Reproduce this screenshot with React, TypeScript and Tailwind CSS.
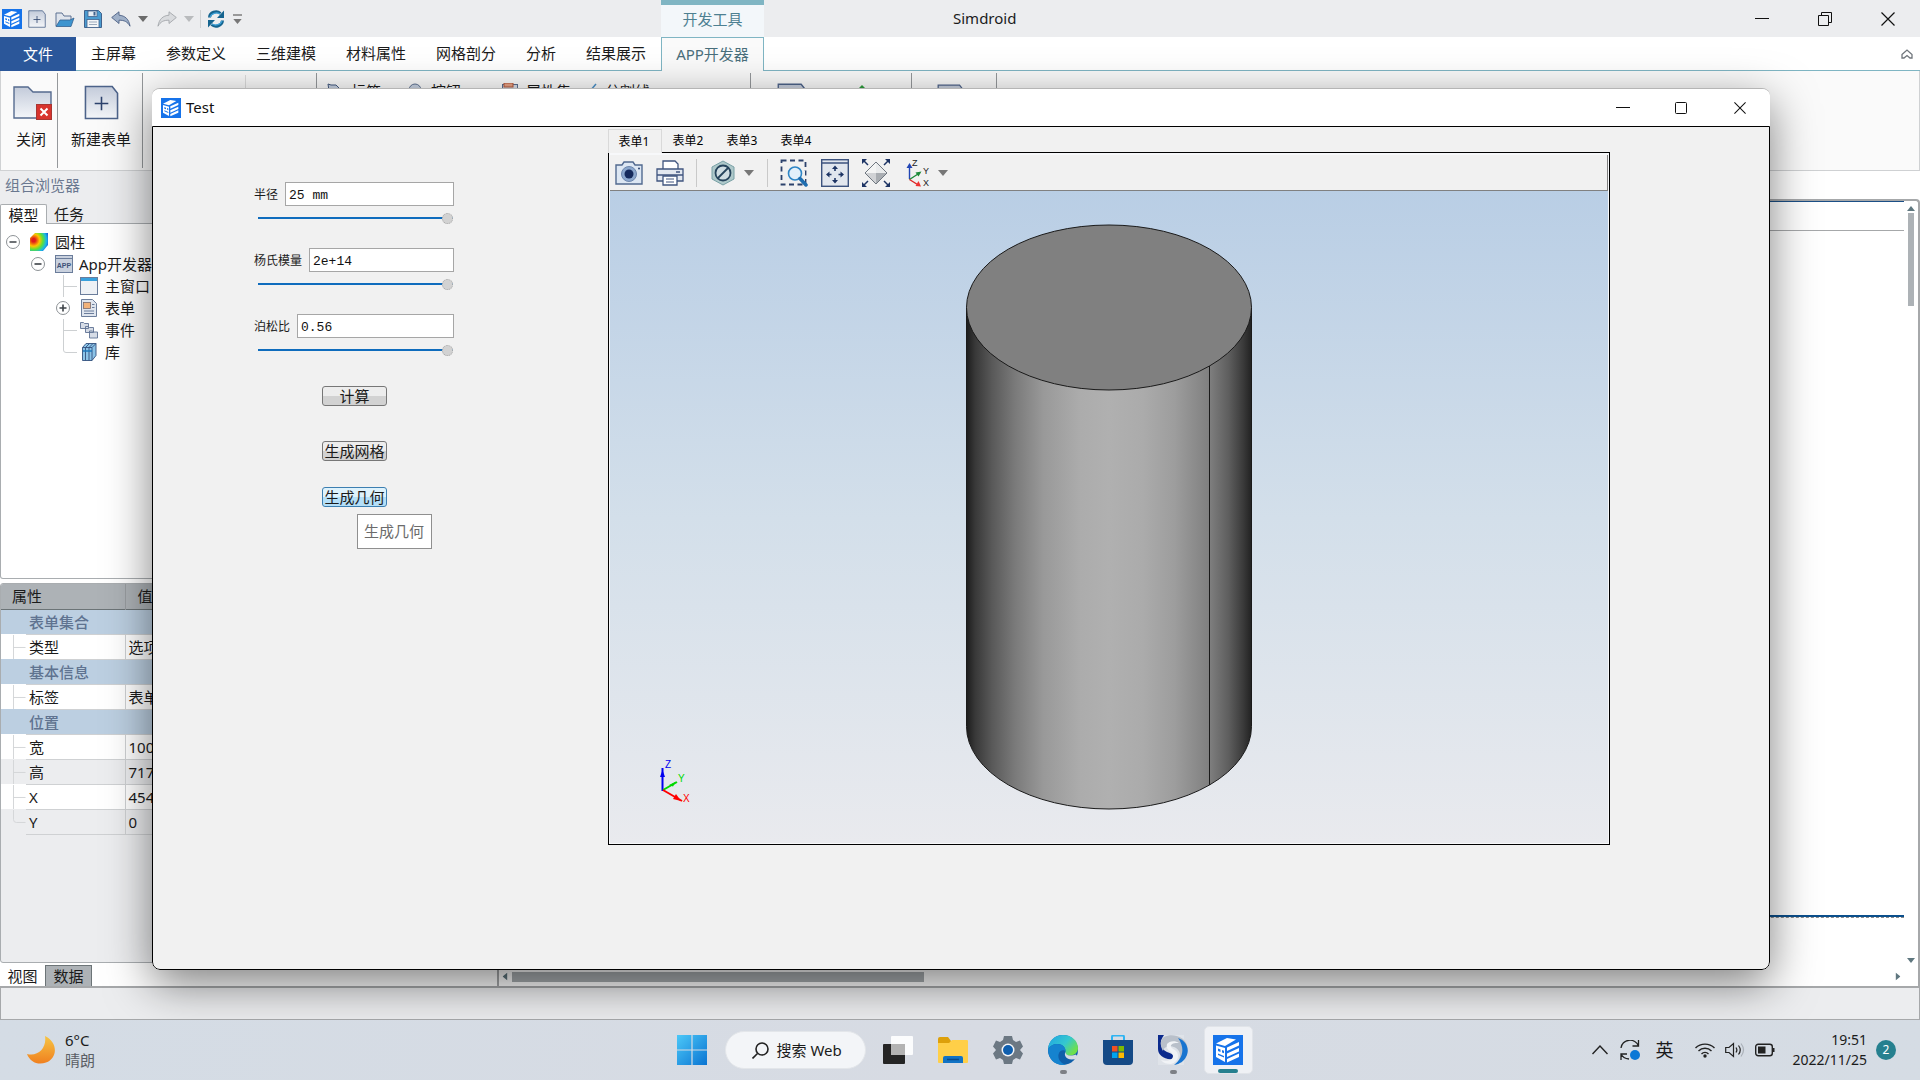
import { useState, type ReactNode } from 'react';

const menuTabs = ['主屏幕', '参数定义', '三维建模', '材料属性', '网格剖分', '分析', '结果展示'];
const formTabs = ['表单1', '表单2', '表单3', '表单4'];

const formFields = [
  { id: 'radius', label: '半径', value: '25 mm' },
  { id: 'young', label: '杨氏模量', value: '2e+14' },
  { id: 'poisson', label: '泊松比', value: '0.56' },
];

type PropRow = { section?: string; name?: string; value?: string; shaded?: boolean; last?: boolean };

const propRows: PropRow[] = [
  { section: '表单集合' },
  { name: '类型', value: '选项卡' },
  { section: '基本信息' },
  { name: '标签', value: '表单集合' },
  { section: '位置' },
  { name: '宽', value: '1002' },
  { name: '高', value: '717', shaded: true },
  { name: 'X', value: '454' },
  { name: 'Y', value: '0', shaded: true, last: true },
];

/* ---------- icons ---------- */

function Logo({ className }: { className: string }) {
  return (
    <svg viewBox="0 0 30 30" className={className}>
      <rect width="30" height="30" fill="#1673ea" />
      <path d="M3 8.500 14 3l9 1.500L12 11z" fill="#fff" />
      <path d="M3 10.500 12 13v14l-9-5z" fill="#fff" />
      <path d="M5 13.500l2.500 1v2.500L5 16zM9 15l2 .7v2.500l-2-.8zM5 18.500l6 2.500v1.500L5 20z" fill="#1673ea" />
      <path d="M14 12.500 26 7v3.500L14 16zM14 18.500 26 13v3.500L14 22zM14 24l12-5.500V22l-12 5.500z" fill="#fff" />
    </svg>
  );
}

function NewDocIcon({ className }: { className: string }) {
  return (
    <svg viewBox="0 0 36 36" className={className}>
      <defs>
        <linearGradient id="docFill" x1="0" y1="0" x2="0" y2="1">
          <stop offset="0" stopColor="#c3cbda" />
          <stop offset="1" stopColor="#f4f6f9" />
        </linearGradient>
      </defs>
      <path d="M1.500 1.500H29l5.500 7V34.500H1.500z" fill="url(#docFill)" stroke="#4d638a" strokeWidth="1.600" />
      <path d="M18 12v14M11 19h14" stroke="#2c426c" strokeWidth="1.600" />
    </svg>
  );
}

function Caret({ className }: { className: string }) {
  return (
    <svg viewBox="0 0 10 6" className={className}>
      <path d="M0 0h10L5 6z" fill="currentColor" />
    </svg>
  );
}

function OpenIcon() {
  return (
    <svg viewBox="0 0 20 18" className="h-[18px] w-5">
      <path d="M1 16V3h6l2 3h7v4" fill="#dfe4ec" stroke="#5c7091" />
      <path d="M1 16.500 5 10h10l4-2-3 8.500z" fill="#3d94cf" stroke="#35618f" strokeWidth=".8" />
    </svg>
  );
}

function SaveIcon() {
  return (
    <svg viewBox="0 0 18 18" className="size-[18px]">
      <path d="M.5.5h14l3 3v14H.5z" fill="#4a9bd0" stroke="#41628c" />
      <rect x="4" y="1" width="9" height="5.500" fill="#e6edf4" stroke="#41628c" strokeWidth=".8" />
      <rect x="9.500" y="2" width="2" height="3.500" fill="#41628c" />
      <rect x="3" y="9.500" width="12" height="8" fill="#f4f6f8" stroke="#41628c" strokeWidth=".8" />
      <path d="M5 12h8M5 14.500h8" stroke="#9aa9bc" />
    </svg>
  );
}

function UndoIcon({ flip }: { flip?: boolean }) {
  return (
    <svg viewBox="0 0 20 16" className={flip ? 'h-4 w-5 -scale-x-100' : 'h-4 w-5'}>
      <path
        d="M.7 6.500 8 .8v3.400c6 .4 10 4 11 11-2.500-4.500-5.500-6-11-6v3.300z"
        fill={flip ? '#d9dbde' : '#9fb0c8'}
        stroke={flip ? '#a3a6aa' : '#4c6084'}
        strokeWidth=".9"
      />
    </svg>
  );
}

function RefreshIcon() {
  return (
    <svg viewBox="0 0 18 18" className="size-[18px]">
      <path d="M2.500 7.500a6.500 6 0 0 1 11-4M15.500 10.500a6.500 6 0 0 1-11 4" fill="none" stroke="#15648f" strokeWidth="3" />
      <path d="M17 .5V8h-7zM1 17.500V10h7z" fill="#15648f" />
      <path d="M3 7a6.500 5.500 0 0 1 10-3M15 11a6.500 5.500 0 0 1-10 3" fill="none" stroke="#3fa3da" strokeWidth="1.200" />
    </svg>
  );
}

function CloseFolderIcon() {
  return (
    <svg viewBox="0 0 39 34" className="h-[34px] w-[39px]">
      <path d="M1 32V1h14l5 5h18v26z" fill="url(#docFill)" stroke="#566b8f" strokeWidth="1.400" />
      <rect x="23.500" y="18.500" width="15" height="15" fill="#d8342e" stroke="#a83632" />
      <path d="m27.500 22.500 7 7m0-7-7 7" stroke="#fff" strokeWidth="2" />
    </svg>
  );
}

function MinimizeIcon() {
  return (
    <svg viewBox="0 0 14 14" className="size-[14px]">
      <path d="M0 6.500h14" stroke="#111" />
    </svg>
  );
}

function RestoreIcon() {
  return (
    <svg viewBox="0 0 14 14" className="size-[14px]" fill="none" stroke="#111">
      <path d="M.5 3.500h10v10H.5zM3.500 3.500v-3h10v10h-3" />
    </svg>
  );
}

function MaximizeIcon() {
  return (
    <svg viewBox="0 0 12 12" className="size-3" fill="none" stroke="#111">
      <rect x=".5" y=".5" width="11" height="11" rx="1" />
    </svg>
  );
}

function CrossIcon({ className }: { className: string }) {
  return (
    <svg viewBox="0 0 14 14" className={className}>
      <path d="m.5.5 13 13m0-13-13 13" stroke="#111" strokeWidth="1.200" />
    </svg>
  );
}

/* ---------- main window chrome ---------- */

function TitleBar() {
  return (
    <header className="flex h-[37px] shrink-0 bg-[#ecedef] text-[#1b1b1b]">
      <div className="flex w-[661px] items-center pl-[2px]">
        <Logo className="size-5" />
        <button aria-label="新建" className="ml-[6px]"><NewDocIcon className="size-[18px]" /></button>
        <button aria-label="打开" className="ml-[9px]"><OpenIcon /></button>
        <button aria-label="保存" className="ml-[9px]"><SaveIcon /></button>
        <button aria-label="撤销" className="ml-[9px]"><UndoIcon /></button>
        <button aria-label="撤销列表" className="ml-[7px] text-[#6b6b6b]"><Caret className="h-[6px] w-[10px]" /></button>
        <button aria-label="重做" className="ml-[9px]"><UndoIcon flip /></button>
        <button aria-label="重做列表" className="ml-[7px] text-[#b9bbbd]"><Caret className="h-[6px] w-[10px]" /></button>
        <span className="ml-[6px] h-[18px] w-px bg-[#cfd1d3]" />
        <button aria-label="刷新" className="ml-[6px]"><RefreshIcon /></button>
        <button aria-label="自定义" className="ml-[8px] flex flex-col gap-[3px] text-[#777]">
          <span className="h-[2px] w-[9px] bg-[#999]" />
          <Caret className="h-[5px] w-[9px]" />
        </button>
      </div>
      <div className="w-[103px] border-t-[5px] border-[#7fb5c3] bg-[#f3f7fa] pt-[3px] text-center text-[15px] leading-[22px] text-[#4d8091]">
        开发工具
      </div>
      <div className="flex flex-1 items-center pl-[189px] text-[15px]">Simdroid</div>
      <button aria-label="最小化" className="flex w-[63px] items-center justify-center"><MinimizeIcon /></button>
      <button aria-label="还原" className="flex w-[63px] items-center justify-center"><RestoreIcon /></button>
      <button aria-label="关闭" className="flex w-16 items-center justify-center"><CrossIcon className="size-[14px]" /></button>
    </header>
  );
}

function MenuBar() {
  return (
    <nav className="flex h-[34px] shrink-0 bg-white text-[15px] text-[#1b1b1b]">
      <button className="w-[76px] bg-[#2b579a] text-white">文件</button>
      <div className="flex w-[585px] border-b border-[#7fb5c3]">
        {menuTabs.map((tab) => (
          <button key={tab} className="px-[15px]">{tab}</button>
        ))}
      </div>
      <button className="w-[103px] border border-b-0 border-[#7fb5c3] bg-[#fafafa] text-[#4a6f7c]">APP开发器</button>
      <div className="flex flex-1 items-center justify-end border-b border-[#7fb5c3] pr-[7px]">
        <button aria-label="折叠功能区">
          <svg viewBox="0 0 12 10" className="h-[10px] w-3">
            <path d="M1 5.500 6 1l5 4.500V9H9L6 6.500 3 9H1z" fill="none" stroke="#70767c" strokeWidth="1.300" />
          </svg>
        </button>
      </div>
    </nav>
  );
}

function RibbonItem({ label, icon, className }: { label: string; icon: ReactNode; className: string }) {
  return (
    <button className={`flex h-5 items-center gap-2 ${className}`}>
      <svg viewBox="0 0 16 16" className="size-4 shrink-0">{icon}</svg>
      {label}
    </button>
  );
}

function Ribbon() {
  return (
    <section className="flex h-[100px] shrink-0 border-x border-b border-[#cfd1d3] bg-[#fafafa] text-[15px] text-[#1b1b1b]">
      <button className="flex w-[56px] flex-col items-center gap-2 pt-[15px] pl-[6px]">
        <CloseFolderIcon />
        <span className="pr-[2px]">关闭</span>
      </button>
      <span className="my-[2px] w-px bg-[#95989b]" />
      <button className="flex w-[84px] flex-col items-center gap-2 pt-[14px] pl-[2px]">
        <NewDocIcon className="size-[35px]" />
        新建表单
      </button>
      <span className="my-[2px] w-px bg-[#95989b]" />
      <div className="w-[102px]" />
      <span className="my-1 w-px bg-[#dcdcdc]" />
      <div className="w-[70px]" />
      <span className="my-[2px] w-px bg-[#95989b]" />
      <div className="flex w-[433px] pt-[10px] pl-[10px]">
        <RibbonItem className="w-20" label="标签" icon={<path d="M1 1l3 1h5l6 6-6 7-7-7z" fill="#c7d2e2" stroke="#43597f" />} />
        <RibbonItem className="w-[95px]" label="按钮" icon={<circle cx="8" cy="7" r="6" fill="#c7d2e2" stroke="#5c7091" />} />
        <RibbonItem
          className="w-[79px]"
          label="属性集"
          icon={<><rect x=".5" y="1.500" width="15" height="14" fill="#d8dee8" stroke="#5c7091" /><rect x="2" y="0" width="9" height="4" fill="#e8a184" stroke="#b0573a" /></>}
        />
        <RibbonItem className="w-[90px]" label="分割线" icon={<path d="M3 15 15 1" stroke="#4a90c8" strokeWidth="1.500" />} />
      </div>
      <span className="my-[2px] w-px bg-[#95989b]" />
      <div className="flex w-[160px] gap-[40px] pt-[12px] pl-[26px]">
        <NewDocIcon className="size-[30px]" />
        <svg viewBox="0 0 30 30" className="size-[30px]"><path d="m15 2 10 10H5z" fill="#2f9e3d" /></svg>
      </div>
      <span className="my-[2px] w-px bg-[#95989b]" />
      <div className="w-[84px] pt-[13px] pl-[25px]">
        <NewDocIcon className="size-7" />
      </div>
      <span className="my-[2px] w-px bg-[#95989b]" />
    </section>
  );
}

/* ---------- left dock ---------- */

function Expander({ open }: { open: boolean }) {
  return (
    <svg viewBox="0 0 14 14" className="size-[14px] shrink-0">
      <circle cx="7" cy="7" r="6.500" fill="#fff" stroke="#8d9296" />
      <path d={open ? 'M3.500 7h7' : 'M3.500 7h7M7 3.500v7'} stroke="#3c4247" strokeWidth="1.600" />
    </svg>
  );
}

function Branch({ last }: { last?: boolean }) {
  return (
    <svg viewBox="0 0 14 22" className="h-[22px] w-[14px] shrink-0" fill="none" stroke="#cdd0d2">
      <path d={last ? 'M.5 0v9q0 2.500 2.500 2.500h11' : 'M.5 0v22M.5 11.500h13.500'} />
    </svg>
  );
}

const treeIcon = 'size-[18px] shrink-0';

function ModelTree() {
  return (
    <ul className="h-[355px] shrink-0 overflow-hidden rounded-b-[3px] border border-t-0 border-[#a9adb0] bg-white pt-[7px] text-[15px] leading-[22px] text-[#1b1b1b]">
      <li className="flex h-[22px] items-center pl-[5px]">
        <Expander open />
        <svg viewBox="0 0 18 18" className={`ml-[10px] mr-[7px] ${treeIcon}`}>
          <defs>
            <radialGradient id="contour" cx=".2" cy=".4" r=".95">
              <stop offset=".1" stopColor="#e01b1b" />
              <stop offset=".35" stopColor="#ffc400" />
              <stop offset=".55" stopColor="#5be03a" />
              <stop offset=".75" stopColor="#19b7e8" />
              <stop offset="1" stopColor="#1b2fd0" />
            </radialGradient>
          </defs>
          <path d="M0 5 5 0h13v12l-5 6H0z" fill="url(#contour)" />
        </svg>
        圆柱
      </li>
      <li className="flex h-[22px] items-center pl-[30px] whitespace-nowrap">
        <Expander open />
        <svg viewBox="0 0 18 18" className={`ml-[10px] mr-[6px] ${treeIcon}`}>
          <rect x=".5" y=".5" width="17" height="17" fill="#c9d1de" stroke="#6b7d9b" />
          <path d="M1 3.500h16" stroke="#6b7d9b" />
          <text x="9" y="13" textAnchor="middle" fontSize="7" fontWeight="700" fill="#3d5279" fontFamily="Liberation Sans, sans-serif">APP</text>
        </svg>
        App开发器
      </li>
      <li className="flex h-[22px] items-center pl-[62px] whitespace-nowrap">
        <Branch />
        <svg viewBox="0 0 18 18" className={`ml-[3px] mr-[7px] ${treeIcon}`}>
          <rect x=".5" y=".5" width="17" height="17" fill="#eef1f5" stroke="#6b7d9b" />
          <rect x="1" y="1" width="16" height="3" fill="#39a0dc" />
        </svg>
        主窗口
      </li>
      <li className="flex h-[22px] items-center pl-[55px]">
        <Expander open={false} />
        <svg viewBox="0 0 18 18" className={`ml-[10px] mr-[7px] ${treeIcon}`}>
          <path d="M1.500.5h11l4 4v13h-15z" fill="#dfe5ee" stroke="#6b7d9b" />
          <rect x="3.500" y="3.500" width="7" height="6" fill="#f2b27a" stroke="#7a6a6a" strokeWidth=".8" />
          <path d="M12 5.500h2.500M12 8.500h2.500M4 12h10M4 14.500h10" stroke="#6b7d9b" />
        </svg>
        表单
      </li>
      <li className="flex h-[22px] items-center pl-[62px]">
        <Branch />
        <svg viewBox="0 0 18 18" className={`ml-[3px] mr-[7px] ${treeIcon}`} fill="#d6dce6" stroke="#5f7293" strokeWidth=".9">
          <path d="M.5 1.500h3l1 1h4v5h-8zM5.500 5.500h3l1 1h4v5h-8zM9.500 10h3l1 1h4v6h-8z" />
        </svg>
        事件
      </li>
      <li className="flex h-[22px] items-center pl-[62px]">
        <Branch last />
        <svg viewBox="0 0 18 18" className={`ml-[3px] mr-[7px] ${treeIcon}`}>
          <path d="M2.500 4.500 6 .5h10v12l-4 5H2.500z" fill="#8cc4e8" stroke="#33517e" strokeWidth=".9" />
          <path d="M2.500 4.500h9.500v13M5.500 4.500v13M9 4.500v13M12 4.500 16 .5M5.500 4.500l4-4M9 4.500l4-4" fill="none" stroke="#33517e" strokeWidth=".9" />
          <path d="M3 8h9" stroke="#1c78bd" strokeWidth="1.500" />
        </svg>
        库
      </li>
    </ul>
  );
}

function PropertyGrid() {
  return (
    <div className="mt-1 flex-1 overflow-hidden rounded-[3px] border border-[#a9adb0] bg-[#ecedef]">
      <table className="w-full table-fixed border-collapse text-left text-[15px] leading-[22px] text-[#1b1b1b]">
        <colgroup>
          <col className="w-[25px]" />
          <col className="w-[99px]" />
          <col />
        </colgroup>
        <thead>
          <tr className="h-[25px] border-b border-[#6c7477] bg-[#adb2b6]">
            <th colSpan={2} className="p-0 pl-[11px] font-normal">属性</th>
            <th className="border-l border-[#989da0] p-0 pl-[12px] font-normal">值</th>
          </tr>
        </thead>
        <tbody>
          {propRows.map((row) =>
            row.section ? (
              <tr key={row.section} className="h-[25px] bg-[#bccfe1]">
                <td className="p-0" />
                <th colSpan={2} className="border-b border-[#cfd1d3] p-0 pl-[3px] font-medium text-[#5f7390]">{row.section}</th>
              </tr>
            ) : (
              <tr key={row.name} className={row.shaded ? 'h-[25px] bg-[#ecedef]' : 'h-[25px] bg-white'}>
                <td className="p-0">
                  <svg viewBox="0 0 25 25" className="block h-6 w-[25px]" fill="none" stroke="#d3d5d7">
                    <path d={row.last ? 'M12.500 0v10q0 3 3 3H25' : 'M12.500-1v27M12.500 13H25'} />
                  </svg>
                </td>
                <td className="border-b border-[#cfd1d3] p-0 pl-[3px]">{row.name}</td>
                <td className="border-b border-l border-[#cfd1d3] p-0 pl-[3px] whitespace-nowrap">{row.value}</td>
              </tr>
            ),
          )}
        </tbody>
      </table>
    </div>
  );
}

function LeftDock() {
  return (
    <aside className="flex w-[495px] shrink-0 flex-col">
      <div className="h-[33px] shrink-0 bg-[#ecedef] pt-[3px] pl-[5px] text-[15px] leading-[22px] text-[#6a7890]">组合浏览器</div>
      <div className="flex h-5 shrink-0 bg-[#ecedef] text-[15px] leading-5 text-[#1b1b1b]">
        <button className="w-[47px] rounded-t-[2px] border border-b-0 border-[#a9adb0] bg-white">模型</button>
        <div className="flex-1 border-b border-[#a9adb0] pl-[7px]"><button>任务</button></div>
      </div>
      <ModelTree />
      <PropertyGrid />
      <div className="mt-[2px] flex h-[21px] shrink-0 text-[15px] leading-5 text-[#1b1b1b]">
        <button className="w-[45px]">视图</button>
        <button className="w-[47px] border border-b-0 border-[#6c7477] bg-[#adb2b6]">数据</button>
      </div>
    </aside>
  );
}

/* Document canvas behind the dialog */
function DocumentArea() {
  return (
    <main className="mt-7 ml-[2px] flex flex-1 flex-col rounded-tr-[4px] border-2 border-b-0 border-[#a6a8aa] bg-white">
      <div className="flex flex-1">
        <div className="flex flex-1 flex-col">
          <div className="h-[30px] border-t border-b border-t-[#1b4f86] border-b-[#a6a8aa]" />
          <div className="flex-1" />
          <div className="h-[2px] bg-[#0b4f8c]" />
          <div className="h-px border-t border-dashed border-[#8a8a8a]" />
          <div className="h-[50px]" />
        </div>
        <div className="flex w-[14px] flex-col items-center pt-[5px] text-[#5f777f]">
          <Caret className="h-[5px] w-2 rotate-180" />
          <span className="mt-[2px] h-[93px] w-[6px] bg-[#adb2b6]" />
          <span className="flex-1" />
          <Caret className="mb-[5px] h-[5px] w-2" />
        </div>
      </div>
      <div className="flex h-[18px] items-start pt-1 pr-4 pl-[2px] text-[#5f777f]">
        <Caret className="mt-[2px] h-[5px] w-2 rotate-90" />
        <span className="ml-[3px] h-[10px] w-[412px] bg-[#a9aeb1]" />
        <span className="flex-1" />
        <Caret className="mt-[2px] h-[5px] w-2 -rotate-90" />
      </div>
    </main>
  );
}

/* ---------- 3D viewer ---------- */

function ViewerToolbar() {
  return (
    <div className="flex h-9 shrink-0 items-center border-r border-b border-[#808080] bg-[#f1f1f1] pl-[5px]">
      <button aria-label="截图">
        <svg viewBox="0 0 28 24" className="h-6 w-7">
          <path d="M1 4h6l2-3h9l2 3h7v19H1z" fill="#dde7f3" stroke="#51698f" strokeWidth="1.400" />
          <circle cx="14" cy="13" r="7.500" fill="#8ba7cd" stroke="#6d86ac" />
          <circle cx="14" cy="13" r="4.500" fill="#152a5c" />
          <circle cx="24" cy="7.500" r="1" fill="#2b4270" />
        </svg>
      </button>
      <button aria-label="打印" className="ml-[13px]">
        <svg viewBox="0 0 28 26" className="h-[26px] w-7" stroke="#40557f" strokeWidth="1.300">
          <path d="M7 9V1h12l3 3v5" fill="#fff" />
          <path d="M1 9h26v12H1z" fill="#e3e8f0" />
          <path d="M1 15h26" />
          <path d="M7 16h14v9H7z" fill="#fff" />
          <path d="M10 19h8M10 22h8" strokeWidth="1" />
          <path d="M20 12h4" />
        </svg>
      </button>
      <span className="ml-3 h-7 w-px bg-[#c9c9c9]" />
      <button aria-label="显示样式" className="ml-[14px]">
        <svg viewBox="0 0 24 26" className="h-[26px] w-6">
          <path d="M12 1l11 6v12l-11 6L1 19V7z" fill="#aec8ca" stroke="#78a0a5" />
          <circle cx="12" cy="13" r="7.500" fill="#cfdde2" stroke="#26445c" strokeWidth="1.800" />
          <path d="m6.500 18.500 11-11" stroke="#26445c" strokeWidth="1.800" />
        </svg>
      </button>
      <button aria-label="显示样式列表" className="ml-[9px] text-[#777]"><Caret className="h-[6px] w-[10px]" /></button>
      <span className="ml-[13px] h-7 w-px bg-[#c9c9c9]" />
      <button aria-label="框选放大" className="ml-3">
        <svg viewBox="0 0 28 28" className="size-7">
          <rect x="1.500" y="1.500" width="24" height="24" fill="none" stroke="#2c426c" strokeWidth="1.800" strokeDasharray="5 3.500" />
          <rect x="12" y="12" width="13" height="12" fill="#f1f1f1" />
          <circle cx="15" cy="14.500" r="6.500" fill="#e3f0fa" stroke="#2f86c6" strokeWidth="1.600" />
          <path d="m20 19.500 6 6.500" stroke="#1f6eb0" strokeWidth="3.500" strokeLinecap="round" />
        </svg>
      </button>
      <button aria-label="平移" className="ml-[13px]">
        <svg viewBox="0 0 28 28" className="size-7">
          <rect x=".7" y=".7" width="26.600" height="26.600" fill="#e1e6ee" stroke="#3b527e" strokeWidth="1.400" />
          <path d="M1 4h26" stroke="#3b527e" strokeWidth="1.400" />
          <path d="M14 8v4M14 19v4M6.500 15.500h4M17.500 15.500h4" stroke="#1d3464" strokeWidth="1.600" />
          <path d="m14 6.500 3 3.500h-6zM14 24.500l3-3.500h-6zM5 15.500l3.500-3v6zM23 15.500l-3.500-3v6z" fill="#1d3464" />
        </svg>
      </button>
      <button aria-label="适应窗口" className="ml-[13px]">
        <svg viewBox="0 0 28 28" className="size-7">
          <path d="M14 3 25 14 14 25 3 14z" fill="#e9ebec" />
          <path d="M3 14h22L14 25z" fill="#a9adb2" />
          <path d="M3 14 14 3v22z" fill="#fff" fillOpacity=".45" />
          <path d="M14 3 25 14 14 25 3 14z" fill="none" stroke="#6f7780" />
          <path d="m2 2 4 4M26 2l-4 4M2 26l4-4M26 26l-4-4" stroke="#1d3464" strokeWidth="1.500" />
          <path d="M0 0h5L0 5zM28 0h-5l5 5zM0 28h5l-5-5zM28 28h-5l5-5z" fill="#1d3464" />
        </svg>
      </button>
      <button aria-label="视图方向" className="ml-4">
        <svg viewBox="0 0 24 28" className="h-7 w-6" fontFamily="Liberation Sans, sans-serif" fontSize="9" fill="#222">
          <path d="M3.500 20V7" stroke="#2145b5" strokeWidth="1.400" />
          <path d="m3.500 4 3 5h-6z" fill="#2145b5" />
          <path d="M3.500 20.500 12 15" stroke="#1d8a3a" strokeWidth="1.400" />
          <path d="m15.500 12.500-3 5-3-4z" fill="#1d8a3a" />
          <path d="m3.500 20.500 8 5" stroke="#d22" strokeWidth="1.400" />
          <path d="m15 27.500-5.500-.5 3-5z" fill="#e33" />
          <text x="6" y="7">Z</text>
          <text x="17" y="15">Y</text>
          <text x="17" y="27">X</text>
        </svg>
      </button>
      <button aria-label="视图方向列表" className="ml-2 text-[#777]"><Caret className="h-[6px] w-[10px]" /></button>
    </div>
  );
}

function Cylinder() {
  return (
    <svg viewBox="0 0 286 586" className="h-[586px] w-[286px]" stroke="#1a1a1a">
      <defs>
        <linearGradient id="cylSide">
          <stop offset="0" stopColor="#1c1c1c" />
          <stop offset=".03" stopColor="#383838" />
          <stop offset=".09" stopColor="#595959" />
          <stop offset=".17" stopColor="#7a7a7a" />
          <stop offset=".27" stopColor="#999" />
          <stop offset=".4" stopColor="#acacac" />
          <stop offset=".5" stopColor="#b0b0b0" />
          <stop offset=".62" stopColor="#ababab" />
          <stop offset=".73" stopColor="#9d9d9d" />
          <stop offset=".85" stopColor="#808080" />
          <stop offset=".92" stopColor="#5e5e5e" />
          <stop offset=".97" stopColor="#3b3b3b" />
          <stop offset="1" stopColor="#222" />
        </linearGradient>
      </defs>
      <path d="M.5 83.500v419a142.500 82.500 0 0 0 285 0v-419" fill="url(#cylSide)" />
      <ellipse cx="143" cy="83.500" rx="142.500" ry="82.500" fill="#808080" />
      <path d="M243.500 142v419" />
    </svg>
  );
}

function AxisTriad() {
  return (
    <svg viewBox="0 0 40 46" className="absolute bottom-[38px] left-[45px] h-[46px] w-10" fontFamily="Liberation Sans, sans-serif" fontSize="10">
      <path d="M7.500 32V9" stroke="#0000f0" strokeWidth="2" />
      <path d="m7.500 11 2.500 7H5z" fill="#0000f0" />
      <path d="M8 31 22 23" stroke="#00d800" strokeWidth="2" />
      <path d="m21 22.500-3 5-4-1.500z" fill="#00d800" />
      <path d="m8 31 19 11" stroke="#f00" strokeWidth="2" />
      <path d="m26 42-8-2 3-5z" fill="#f00" />
      <text x="10" y="9" fill="#0000f0">Z</text>
      <text x="23" y="23" fill="#00d800">Y</text>
      <text x="28" y="43" fill="#f00">X</text>
    </svg>
  );
}

/* ---------- running app dialog ---------- */

function ParameterForm() {
  return (
    <form className="flex w-[455px] shrink-0 flex-col pt-[55px] pl-[101px]" onSubmit={(e) => e.preventDefault()}>
      <div className="flex w-[200px] flex-col gap-[22px]">
        {formFields.map((field) => (
          <div key={field.id}>
            <div className="flex h-6 items-center gap-[7px]">
              <label htmlFor={field.id} className="pt-[2px] text-xs text-[#1b1b1b]">{field.label}</label>
              <input
                id={field.id}
                defaultValue={field.value}
                className="h-6 min-w-0 flex-1 border border-[#a6a6a6] bg-white px-[3px] pt-[2px] font-['Liberation_Mono','Noto_Sans_CJK_SC',monospace] text-[13px] text-[#111] outline-none"
              />
            </div>
            <input
              type="range"
              aria-label={field.label}
              defaultValue={100}
              className="mt-1 ml-1 block h-4 w-[195px] appearance-none bg-transparent [&::-webkit-slider-runnable-track]:h-[2px] [&::-webkit-slider-runnable-track]:bg-[#0f6cbd] [&::-webkit-slider-thumb]:-mt-[4px] [&::-webkit-slider-thumb]:size-[11px] [&::-webkit-slider-thumb]:appearance-none [&::-webkit-slider-thumb]:rounded-full [&::-webkit-slider-thumb]:border [&::-webkit-slider-thumb]:border-dotted [&::-webkit-slider-thumb]:border-[#a8a8a8] [&::-webkit-slider-thumb]:bg-[#d2d2d2]"
            />
          </div>
        ))}
      </div>
      <div className="mt-7 ml-[68px] flex w-[65px] flex-col text-[15px] leading-[18px] text-[#1b1b1b]">
        <button className="h-5 rounded-[3px] border border-[#777] bg-linear-to-b from-[#ededed] from-50% to-[#d2d2d2] to-50%">计算</button>
        <button className="mt-[35px] h-5 rounded-[3px] border border-[#777] bg-linear-to-b from-[#ededed] from-50% to-[#d2d2d2] to-50%">生成网格</button>
        <div className="relative mt-[26px] h-5">
          <button className="h-5 w-full rounded-[3px] border border-[#3c7fb1] bg-linear-to-b from-[#def2fc] from-50% to-[#b4dff8] to-50%">生成几何</button>
          <div role="tooltip" className="absolute top-[27px] left-[35px] border border-[#8f8f8f] bg-white pt-[7px] pr-[7px] pb-2 pl-[6px] whitespace-nowrap text-[#6b6b6b]">
            生成几何
          </div>
        </div>
      </div>
    </form>
  );
}

function TestDialog() {
  const [activeTab, setActiveTab] = useState('表单1');

  return (
    <section className="absolute top-[88px] right-[150px] bottom-[110px] left-[152px] flex flex-col overflow-hidden rounded-[8px] border-t border-[#b5b5b5] bg-white shadow-[0_14px_46px_rgba(0,0,0,0.5)]">
      <div className="flex h-[37px] shrink-0 items-center bg-white pl-[9px] text-[#111]">
        <Logo className="size-5" />
        <span className="ml-[5px] flex-1 text-[15px]">Test</span>
        <button aria-label="最小化" className="flex h-full w-[58px] items-center justify-center"><MinimizeIcon /></button>
        <button aria-label="最大化" className="flex h-full w-[58px] items-center justify-center"><MaximizeIcon /></button>
        <button aria-label="关闭" className="flex h-full w-[60px] items-center justify-center"><CrossIcon className="size-3" /></button>
      </div>

      <div className="flex flex-1 rounded-b-[8px] border border-black bg-[#f1f1f1]">
        <ParameterForm />

        <div className="mt-[2px] mr-[159px] mb-[124px] flex flex-1 flex-col">
          <div role="tablist" className="flex h-6 shrink-0 text-xs text-black">
            {formTabs.map((tab) => (
              <button
                key={tab}
                role="tab"
                aria-selected={tab === activeTab}
                onClick={() => setActiveTab(tab)}
                className={
                  tab === activeTab
                    ? 'w-[54px] border border-b-0 border-[#d9d9d9] pr-[2px]'
                    : 'w-[54px] border-b border-black pr-[2px]'
                }
              >
                {tab}
              </button>
            ))}
            <span className="flex-1 border-b border-black" />
          </div>
          <div className="flex flex-1 flex-col border border-t-0 border-black bg-[#f7f8fa] px-px pt-[2px] pb-px">
            <ViewerToolbar />
            <div className="relative flex flex-1 items-center justify-center bg-linear-to-b from-[#b9cee5] via-[#d3dfea] to-[#e9eaee]">
              <Cylinder />
              <AxisTriad />
            </div>
          </div>
        </div>
      </div>
    </section>
  );
}

/* ---------- taskbar ---------- */

function TaskButton({ label, running, children }: { label: string; running?: boolean; children: ReactNode }) {
  return (
    <button aria-label={label} className="relative flex h-full w-[55px] items-center justify-center">
      <svg viewBox="0 0 30 30" className="size-[30px]">{children}</svg>
      {running && <span className="absolute bottom-[6px] h-1 w-[7px] rounded-full bg-[#7d8086]" />}
    </button>
  );
}

function Taskbar() {
  return (
    <footer className="grid h-[60px] shrink-0 grid-cols-[1fr_auto_1fr] bg-linear-to-r from-[#d4dce5] via-[#d7dbe3] to-[#d5dce4]">
      <button className="flex items-center gap-[9px] pl-[26px] text-left text-[15px] leading-5">
        <svg viewBox="0 0 30 30" className="size-[30px]">
          <defs>
            <linearGradient id="moon" x1="0" y1="0" x2="0" y2="1">
              <stop offset="0" stopColor="#f6c544" />
              <stop offset="1" stopColor="#f0801f" />
            </linearGradient>
          </defs>
          <path d="M19 1c13 6 13 22 1 26.500C12 30.500 4 27 1 19c11 3 20-6 18-18z" fill="url(#moon)" />
        </svg>
        <span>
          <span className="block text-[#1b1b1b]">6°C</span>
          <span className="block text-[#5b5f65]">晴朗</span>
        </span>
      </button>

      <div className="flex items-center">
        <TaskButton label="开始">
          <defs>
            <linearGradient id="win" x1="0" y1="0" x2="1" y2="1">
              <stop offset="0" stopColor="#4cc8f8" />
              <stop offset="1" stopColor="#0a74d2" />
            </linearGradient>
          </defs>
          <path d="M0 0h14.400v14.400H0zM15.600 0H30v14.400H15.600zM0 15.600h14.400V30H0zM15.600 15.600H30V30H15.600z" fill="url(#win)" />
        </TaskButton>
        <button className="mx-[5px] flex h-[38px] w-[141px] items-center gap-2 rounded-full border border-[#e3e6ea] bg-[#f3f5f8] pl-[26px] text-[15px] text-[#1b1b1b]">
          <svg viewBox="0 0 17 17" className="size-[17px]" fill="none" stroke="#222" strokeWidth="1.600">
            <circle cx="10" cy="7" r="6" />
            <path d="M5.500 11.500.5 16.500" />
          </svg>
          搜索 Web
        </button>
        <TaskButton label="任务视图">
          <rect x="0" y="9" width="22" height="20" rx="1" fill="#252525" />
          <rect x="8" y="1" width="22" height="19" rx="1" fill="#fff" fillOpacity=".9" />
          <rect x="8" y="9" width="14" height="11" fill="#b3b3b3" />
        </TaskButton>
        <TaskButton label="文件资源管理器">
          <path d="M0 4q0-2 2-2h8l3 4v5H0z" fill="#dda00b" />
          <path d="M0 8h11l3-3h15q1 0 1 1v21q0 1-1 1H1q-1 0-1-1z" fill="#ffcf48" />
          <path d="M5 28v-5q0-2 2-2h16q2 0 2 2v5z" fill="#1273c4" />
          <path d="M9 24.500h12" stroke="#0a4a8a" strokeWidth="1.500" />
        </TaskButton>
        <TaskButton label="设置">
          <path d="M11 1h8l1 4 3 2 4-1.500 3 6-3 3.500 3 3.500-3 6L23 23l-3 2-1 4h-8l-1-4-3-2-4 1.500-3-6L3 15 0 11.500l3-6L7 7l3-2z" fill="#6c7883" />
          <circle cx="15" cy="15" r="6.500" fill="#f3f5f8" />
          <circle cx="15" cy="15" r="5" fill="#0f5fae" />
        </TaskButton>
        <TaskButton label="Edge" running>
          <defs>
            <linearGradient id="edgeTop" x1="0" y1="0" x2="1" y2=".6">
              <stop offset="0" stopColor="#1fa3e4" />
              <stop offset=".6" stopColor="#35c8cf" />
              <stop offset="1" stopColor="#6fe04a" />
            </linearGradient>
          </defs>
          <circle cx="15" cy="15" r="15" fill="#0f5ea9" />
          <path d="M0 14C1 5 7 0 15 0c9 0 15 6 15 13 0 5-4 7.500-8 7.500-3 0-5-1-4.500-3C18 14 16 9 9 9c-4 0-7 2-9 5z" fill="url(#edgeTop)" />
          <path d="M0 14c2-3 5-5 9-5 6 0 9 4 8.500 7.500-1-2-6-2-7 3C9.500 25 14 29 18 29.700 8 31.500 0 25 0 14z" fill="#1583cf" />
          <path d="M17.500 17c-2 3 1 7.500 6 7.500 2 0 4-.5 6-1.500-.5-2-.5-3-2-3.500-1 .7-3 1-5.500 1-3 0-4.500-1.500-4.500-3.500z" fill="#d7dbe3" />
        </TaskButton>
        <TaskButton label="Microsoft Store">
          <path d="M9 6V2q0-1.500 1.500-1.500h9Q21 .5 21 2v4" fill="none" stroke="#2fb4f2" strokeWidth="2" />
          <path d="M0 5h30v21q0 4-4 4H4q-4 0-4-4z" fill="#154a86" />
          <path d="M9 11h5.500v5.500H9z" fill="#f25022" />
          <path d="M15.500 11H21v5.500h-5.500z" fill="#7fba00" />
          <path d="M9 17.500h5.500V23H9z" fill="#00a4ef" />
          <path d="M15.500 17.500H21V23h-5.500z" fill="#ffb900" />
        </TaskButton>
        <TaskButton label="Simdroid 启动器" running>
          <rect width="26" height="30" fill="#dfe3e9" />
          <path d="M0 0h6C0 8 3 14 9 17c6 2 8 4 6 7C6 25 0 20 0 14z" fill="#0b2a8c" />
          <path d="M6 2C14-2 26 1 29 10c2 8-2 16-12 20 6-6 7-13 1-17-5-3-12-2-13 3C2 11 2 5 6 2z" fill="#b9c0ca" />
          <path d="M20 3c9 3 12 12 8 19-2 4-6 7-12 8 8-6 12-16 4-27z" fill="#1874d0" />
          <path d="M9 9c2-3 8-4 12-1-5-.5-9 1-8 4 1 2 7 3 7 9 0 4-3 7-7 8-4 0-8-1-10-4 6 2 12 0 12-4 0-5-8-5-6-12z" fill="#f1f3f6" />
        </TaskButton>
        <button aria-label="Simdroid" className="relative mx-[3px] flex h-12 w-[49px] items-center justify-center rounded-[5px] border border-[#e1e4e9] bg-[#eff1f5]">
          <Logo className="size-[30px]" />
          <span className="absolute bottom-0 h-1 w-5 rounded-full bg-[#26808f]" />
        </button>
      </div>

      <div className="flex items-center justify-end pr-6 text-[#1b1b1b]">
        <button aria-label="显示隐藏的图标">
          <svg viewBox="0 0 16 10" className="h-[10px] w-4" fill="none" stroke="#222" strokeWidth="1.400"><path d="m.5 9 7.500-8 7.500 8" /></svg>
        </button>
        <button aria-label="更新" className="ml-3">
          <svg viewBox="0 0 20 20" className="size-5" fill="none" stroke="#222" strokeWidth="1.300">
            <path d="M1 8a9 8.500 0 0 1 17.500-2M18.500 0v6h-6M1 20v-6h6M1 14q2 4.500 8 5" />
            <circle cx="15" cy="15" r="5" fill="#0a78d6" stroke="none" />
          </svg>
        </button>
        <button className="ml-4 text-[18px]">英</button>
        <button aria-label="网络" className="ml-[21px]">
          <svg viewBox="0 0 20 16" className="h-4 w-5" fill="none" stroke="#222" strokeWidth="1.400">
            <path d="M.5 6a13.500 13.500 0 0 1 19 0M3.500 9a9.200 9.200 0 0 1 13 0M6.500 12a5 5 0 0 1 7 0" />
            <circle cx="10" cy="14" r="1.700" fill="#222" stroke="none" />
          </svg>
        </button>
        <button aria-label="音量" className="ml-[10px]">
          <svg viewBox="0 0 20 16" className="h-4 w-5" fill="none" stroke="#222" strokeWidth="1.200">
            <path d="M.7 5.500H4L8.500 1.500v13L4 10.500H.7zM11 5.500q1.800 2.500 0 5M13.500 3.500q3.500 4.500 0 9" />
            <path d="M16 1.500q5 6.500 0 13" stroke="#aab0b8" />
          </svg>
        </button>
        <button aria-label="电池" className="ml-[10px]">
          <svg viewBox="0 0 20 14" className="h-[14px] w-5">
            <rect x=".7" y="1.200" width="16.600" height="11.600" rx="2.500" fill="none" stroke="#222" strokeWidth="1.400" />
            <rect x="3" y="3.500" width="7.500" height="7" fill="#222" />
            <path d="M18 5h1.500v4H18z" fill="#222" />
          </svg>
        </button>
        <button className="ml-[18px] text-right text-[14px] leading-5">
          <span className="block">19:51</span>
          <span className="block">2022/11/25</span>
        </button>
        <span className="ml-[9px] flex size-5 items-center justify-center rounded-full bg-[#26808f] text-xs text-white">2</span>
      </div>
    </footer>
  );
}

export default function App() {
  return (
    <div className="relative flex h-screen min-h-[960px] w-full flex-col overflow-hidden bg-white font-['Noto_Sans','Noto_Sans_CJK_SC',sans-serif]">
      <TitleBar />
      <MenuBar />
      <Ribbon />
      <div className="flex min-h-0 flex-1">
        <LeftDock />
        <DocumentArea />
      </div>
      <div className="h-[34px] shrink-0 border border-t-2 border-[#a6a8aa] bg-[#ecedef]" />
      <TestDialog />
      <div className="relative">
        <Taskbar />
      </div>
    </div>
  );
}
